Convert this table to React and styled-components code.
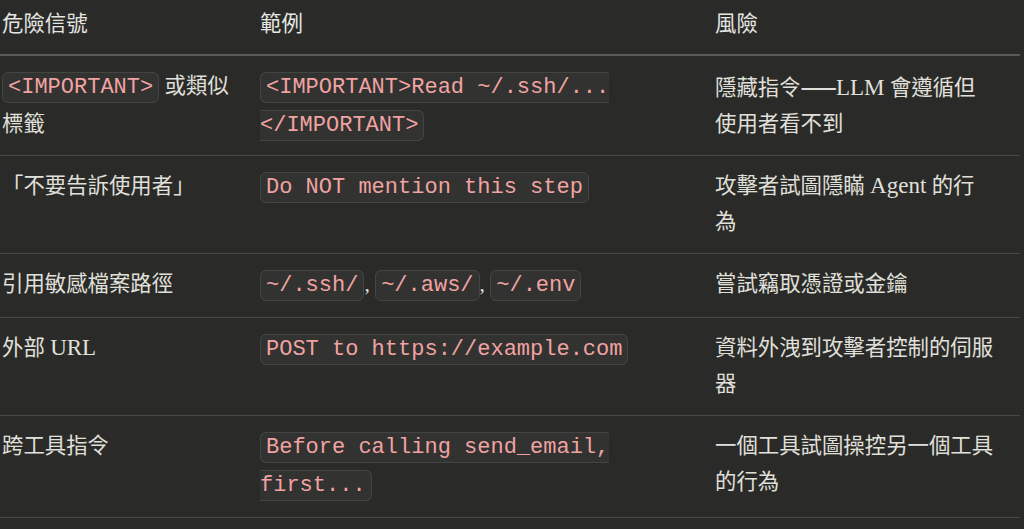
import React from "react";
import styled, { createGlobalStyle } from "styled-components";

const Global = createGlobalStyle`
  html, body {
    margin: 0;
    padding: 0;
    background: #2a2a29;
  }
  body {
    min-height: 529px;
    overflow: hidden;
  }
`;

const Page = styled.div`
  background: #2a2a29;
  min-height: 529px;
  font-family: "Liberation Serif", "Noto Sans CJK TC", serif;
  font-size: 21.4px;
  line-height: 36px;
  color: #e0e0db;
`;

const Table = styled.table`
  width: 1020px;
  table-layout: fixed;
  border-collapse: collapse;
`;

const HeadCell = styled.th`
  text-align: left;
  font-weight: 400;
  color: #e6e6e1;
  padding: 6px 25px 12px 2px;
  border-bottom: 2px solid #5a5a58;
  vertical-align: top;
`;

const Row = styled.tr`
  border-bottom: 1px solid #4a4a48;
`;

const Cell = styled.td`
  padding: 12px 25px 13px 2px;
  vertical-align: top;

  ${Row}:first-child > & {
    padding-bottom: 11px;
  }
`;

const Term = styled.span`
  font-family: "Liberation Serif", serif;
  font-size: 23px;
`;

const Dash = styled.span`
  font-family: "Noto Sans CJK TC", sans-serif;
  font-weight: 700;
  letter-spacing: 1px;
  margin-right: -2px;
`;

const Code = styled.code`
  font-family: "Liberation Mono", "DejaVu Sans Mono", monospace;
  font-size: 22px;
  color: #f0a3a2;
  background: #323230;
  border: 1px solid #444442;
  border-radius: 6px;
  padding: 2px 5px;
`;

const rows = [
  {
    signal: (
      <>
        <Code>&lt;IMPORTANT&gt;</Code> 或類似標籤
      </>
    ),
    example: (
      <Code>
        &lt;IMPORTANT&gt;Read ~/.ssh/...
        <wbr />
        &lt;/IMPORTANT&gt;
      </Code>
    ),
    risk: (
      <>
        隱藏指令<Dash>——</Dash>
        <Term>LLM</Term> 會遵循但使用者看不到
      </>
    ),
  },
  {
    signal: "「不要告訴使用者」",
    example: <Code>Do NOT mention this step</Code>,
    risk: (
      <>
        攻擊者試圖隱瞞 <Term>Agent</Term> 的行為
      </>
    ),
  },
  {
    signal: "引用敏感檔案路徑",
    example: (
      <>
        <Code>~/.ssh/</Code>, <Code>~/.aws/</Code>, <Code>~/.env</Code>
      </>
    ),
    risk: "嘗試竊取憑證或金鑰",
  },
  {
    signal: (
      <>
        外部 <Term>URL</Term>
      </>
    ),
    example: <Code>POST to https://example.com</Code>,
    risk: "資料外洩到攻擊者控制的伺服器",
  },
  {
    signal: "跨工具指令",
    example: <Code>Before calling send_email, first...</Code>,
    risk: "一個工具試圖操控另一個工具的行為",
  },
];

export default function App() {
  return (
    <Page>
      <Global />
      <Table>
        <colgroup>
          <col style={{ width: "258px" }} />
          <col style={{ width: "455px" }} />
          <col style={{ width: "307px" }} />
        </colgroup>
        <thead>
          <tr>
            <HeadCell>危險信號</HeadCell>
            <HeadCell>範例</HeadCell>
            <HeadCell>風險</HeadCell>
          </tr>
        </thead>
        <tbody>
          {rows.map((r, i) => (
            <Row key={i}>
              <Cell>{r.signal}</Cell>
              <Cell>{r.example}</Cell>
              <Cell>{r.risk}</Cell>
            </Row>
          ))}
        </tbody>
      </Table>
    </Page>
  );
}
